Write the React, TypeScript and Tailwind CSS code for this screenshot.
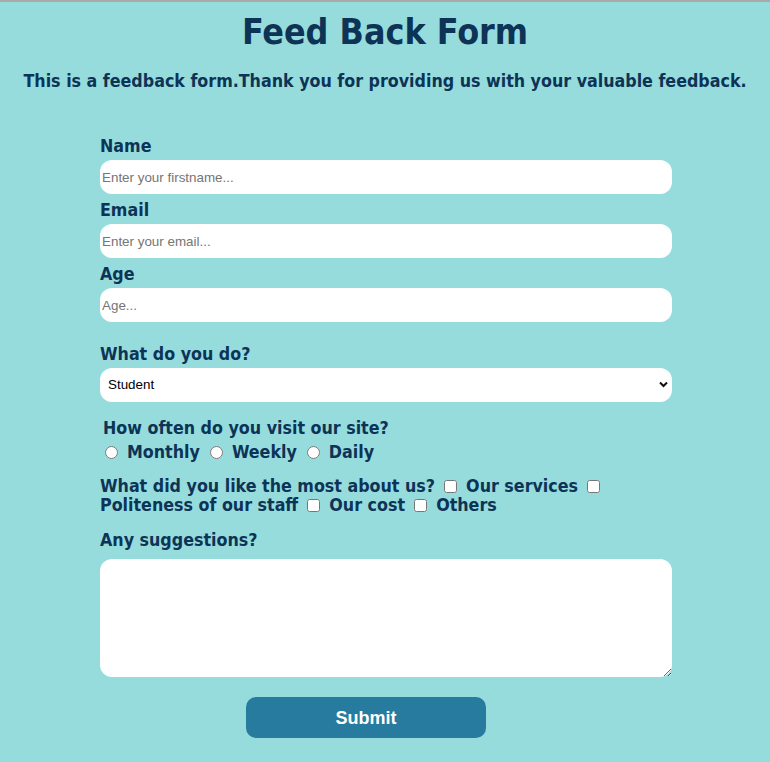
export default function App() {
  return (
    <div
      className="min-h-screen bg-[#96dcdc] border-t-2 border-[#a9a9a9] text-[#0d3356]"
      style={{ fontFamily: '"DejaVu Sans Condensed", "DejaVu Sans", sans-serif' }}
    >
      <h1 className="text-center text-[35.5px] leading-[41px] font-bold pt-[9px]">Feed Back Form</h1>
      <p className="text-center text-[17.7px] leading-[20px] font-bold mt-[19px]">
        This is a feedback form.Thank you for providing us with your valuable feedback.
      </p>

      <form className="w-[572px] ml-[100px] mt-[45px] flex flex-col font-bold text-[17.7px] leading-[20px]">
        <label className="block">Name</label>
        <input
          type="text"
          placeholder="Enter your firstname..."
          className="mt-[4px] h-[34px] rounded-xl bg-white px-[2px] text-[13.4px] font-normal text-black placeholder:text-[#757575] outline-none font-['Liberation_Sans',Arial,sans-serif]"
        />

        <label className="block mt-[6px]">Email</label>
        <input
          type="email"
          placeholder="Enter your email..."
          className="mt-[4px] h-[34px] rounded-xl bg-white px-[2px] text-[13.4px] font-normal text-black placeholder:text-[#757575] outline-none font-['Liberation_Sans',Arial,sans-serif]"
        />

        <label className="block mt-[6px]">Age</label>
        <input
          type="number"
          placeholder="Age..."
          className="mt-[4px] h-[34px] rounded-xl bg-white px-[2px] text-[13.4px] font-normal text-black placeholder:text-[#757575] outline-none font-['Liberation_Sans',Arial,sans-serif]"
        />

        <label className="block mt-[22px]">What do you do?</label>
        <div className="relative mt-[4px]">
          <select className="w-full h-[34px] rounded-xl bg-white pl-[8px] text-[13.4px] font-normal text-black appearance-none outline-none font-['Liberation_Sans',Arial,sans-serif]">
            <option>Student</option>
            <option>Working professional</option>
            <option>Other</option>
          </select>
          <svg
            className="absolute right-[4px] top-[13px] pointer-events-none"
            width="9"
            height="7"
            viewBox="0 0 9 7"
          >
            <path d="M1 1.5 L4.5 5 L8 1.5" fill="none" stroke="#111" strokeWidth="2" />
          </svg>
        </div>

        <p className="mt-[16px] ml-[3px]">How often do you visit our site?</p>
        <div className="flex items-center mt-[4px] ml-[5px]">
          <input type="radio" name="freq" className="w-[13px] h-[13px] m-0 mr-[9px]" />
          <span className="mr-[10px]">Monthly</span>
          <input type="radio" name="freq" className="w-[13px] h-[13px] m-0 mr-[9px]" />
          <span className="mr-[10px]">Weekly</span>
          <input type="radio" name="freq" className="w-[13px] h-[13px] m-0 mr-[9px]" />
          <span>Daily</span>
        </div>

        <p className="mt-[15px] leading-[19px] w-[510px]">
          What did you like the most about us?{" "}
          <input type="checkbox" className="w-[13px] h-[13px] align-[-1px] ml-[3px] mr-[4px]" /> Our services{" "}
          <input type="checkbox" className="w-[13px] h-[13px] align-[-1px] ml-[3px] mr-[4px]" /> Politeness of our staff{" "}
          <input type="checkbox" className="w-[13px] h-[13px] align-[-1px] ml-[3px] mr-[4px]" /> Our cost{" "}
          <input type="checkbox" className="w-[13px] h-[13px] align-[-1px] ml-[3px] mr-[4px]" /> Others
        </p>

        <label className="block mt-[15px]">Any suggestions?</label>
        <textarea className="mt-[9px] h-[118px] rounded-xl bg-white outline-none font-normal text-[13px] text-black p-[2px]" />

        <button
          type="button"
          className="mt-[20px] self-center w-[240px] h-[41px] rounded-[10px] bg-[#267b9f] text-white text-[18px] font-bold font-['Liberation_Sans',Arial,sans-serif] -ml-[40px]"
        >
          Submit
        </button>
      </form>
    </div>
  );
}
